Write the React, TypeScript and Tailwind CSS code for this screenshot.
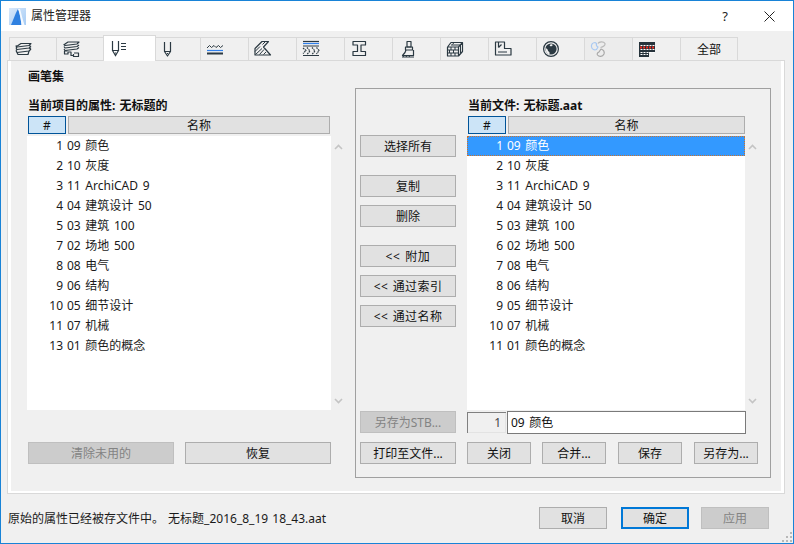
import React from 'react';

const leftRows = [
  ['1', '09 颜色'], ['2', '10 灰度'], ['3', '11 ArchiCAD 9'], ['4', '04 建筑设计 50'], ['5', '03 建筑 100'],
  ['7', '02 场地 500'], ['8', '08 电气'], ['9', '06 结构'], ['10', '05 细节设计'], ['11', '07 机械'], ['13', '01 颜色的概念'],
];
const rightRows = [
  ['1', '09 颜色'], ['2', '10 灰度'], ['3', '11 ArchiCAD 9'], ['4', '04 建筑设计 50'], ['5', '03 建筑 100'],
  ['6', '02 场地 500'], ['7', '08 电气'], ['8', '06 结构'], ['9', '05 细节设计'], ['10', '07 机械'], ['11', '01 颜色的概念'],
];

const Ico: React.FC<{ children: React.ReactNode }> = ({ children }) => (
  <svg width="18" height="18" viewBox="0 0 18 18" fill="none" stroke="#2b3942" strokeWidth="1.2" strokeLinejoin="round" className="block shrink-0">
    {children}
  </svg>
);

const tabIcons: React.ReactNode[] = [
  <Ico key="0">
    <path d="M3 5.5L6 3.5H16L14 5.5L2 7L1 6ZM1 8L2 9.5L14 8L16 6.5M1 10.5L2 12.5L14 11L16 9" />
    <path d="M2 7L1 8M2 9.5L1 10.5M14 5.5L16 6.5M14 8L16 9M2 12.5L3 14.5H13L14 11" />
  </Ico>,
  <Ico key="1">
    <path d="M3 4L6 2H17L15 4L3 5.5L2 4.5ZM2 6.5L3 8L15 6.5L17 5M2 9L3 10.5L15 9L17 7.5" />
    <path d="M5.5 11H2.5V14H6V12H9V15.5H12M12 13H16.5V16.5H11.5V14" />
  </Ico>,
  <svg key="2" width="20" height="18" viewBox="0 0 20 18" fill="none" stroke="#2b3942" strokeWidth="1.2" className="block shrink-0">
    <path d="M1.5 1V10.5H7.5V1M1.5 10.5L4.5 15.5L7.5 10.5M4 13H5" />
    <path d="M10 3.5H15M10 6.5H15M10 9.5H15" />
  </svg>,
  <Ico key="3">
    <path d="M3.5 2V11.5H9.5V2M3.5 11.5L6.5 16L9.5 11.5" />
    <path d="M6 13.5H7" />
  </Ico>,
  <Ico key="4">
    <path d="M1 8L3.5 5.5L5.5 7.5L8 5.5L10 7.5L12.5 5.5L14.5 7.5L17 5.5" strokeWidth="1" />
    <path d="M1 10.5H17" stroke="#2f80ed" />
    <path d="M1 13.5H17" strokeWidth="2" />
  </Ico>,
  <Ico key="5">
    <path d="M1 15V8.5L8 1.5H14.5L9.5 7L16.5 15Z" />
    <path d="M1 11.5L6 6.5M1.5 14.5L8 8.5M5.5 14.5L10 9.5M9.5 14.5L12 12M8.5 4.5L11 2" strokeWidth="1" />
  </Ico>,
  <Ico key="6">
    <path d="M1 1.5H17" />
    <path d="M1 3.5H17" stroke="#2f80ed" />
    <path d="M1 6H17M1 15.5H17" />
    <path d="M1 8L4 10.5L1 13.5M5 7.5L8 11L5 14.5M10 7.5L13 11L10 14.5M14.5 7.5L17 10.5L14.5 14" strokeDasharray="1.6 0.8" />
  </Ico>,
  <Ico key="7">
    <path d="M3 1.5H15.5V5H11V11.5H15.5V15.5H3V11.5H7.5V5H3Z" />
  </Ico>,
  <Ico key="8">
    <path d="M9 1.5H13V7H9Z" />
    <path d="M7.5 7H14.5V10H7.5ZM8 10L7 12.5L4.5 15.5H15.5V10" />
    <path d="M4 17H16M6 15.5L5 17M9 15.5L8 17M12 15.5L11 17" strokeWidth="1" />
  </Ico>,
  <Ico key="9">
    <path d="M1.5 7V16H12.5V7ZM1.5 7L5 2.5H16.5L12.5 7M16.5 2.5V11.5L12.5 16" />
    <path d="M1.5 10H12.5M1.5 13H12.5M5 7V10M9 7V10M3.5 10V13M7.5 10V13M5 13V16M9 13V16M14.5 5V13M5 5H14M8 2.5L6.5 4.5" strokeWidth="1" />
  </Ico>,
  <Ico key="10">
    <path d="M1.5 2H10.5V8.5H17V15H1.5Z" />
    <path d="M4.5 2V7.5M4.5 7.5L7.5 4.5M4 12H13" />
  </Ico>,
  <Ico key="11">
    <circle cx="9" cy="9" r="7.4" strokeWidth="1.2" />
    <circle cx="9" cy="9" r="5.6" fill="#2b3942" stroke="none" />
    <path d="M3.5 8C5 9 6 9 6 11C7 11.5 8 12 7.5 14.5C5 14 3.5 11.5 3.5 8ZM9 4L11 5L9 6.5L7.5 5.5Z" fill="#f0f0f0" stroke="none" />
  </Ico>,
  <Ico key="12">
    <path d="M5 2.5C2.5 2.5 1 4.5 1.5 7C2 9.5 4.5 10.5 6.5 9.5L8 7C7 6.5 6 5 6.5 3.5Z" stroke="#a9c9f2" />
    <path d="M8 3.5C9 1.5 13.5 1 15 3.5C15.5 5.5 13 7 10.5 7.5" stroke="#b9b9b9" />
    <path d="M11 9C13.5 10 15 11 14 14C12.5 17 9 17 7.5 15C6.5 13.5 8 12.5 9 12Z" stroke="#a8a8a8" />
  </Ico>,
  <svg key="13" width="16" height="15" viewBox="0 0 16 15" className="block shrink-0">
    <rect width="16" height="10" fill="#26333b" />
    <rect x="0" y="10" width="10" height="5" fill="#26333b" />
    <path d="M1.5 3.5H16M1.5 7.5H16M1.5 10.5H16" stroke="#fff" strokeDasharray="2 1" />
    <path d="M1 5.5H16" stroke="#e8291c" strokeWidth="2" strokeDasharray="2 1" />
    <path d="M1.5 12.5H9" stroke="#fff" strokeDasharray="2 1" />
  </svg>,
];

const tabWidths = ['w-[48px]', 'w-[48px]', 'w-[53px]', 'w-[46px]'];

const Btn: React.FC<{
  label: string;
  w?: string;
  disabled?: boolean;
  primary?: boolean;
  className?: string;
}> = ({ label, w = 'w-full', disabled, primary, className = '' }) => {
  let tone = 'border border-[#adadad] bg-[#e1e1e1] text-[#111]';
  if (disabled) tone = 'border border-[#bfbfbf] bg-[#cccccc] text-[#838383]';
  if (primary) tone = 'border-2 border-[#0078d7] bg-[#e1e1e1] text-[#111]';
  return (
    <div className={`${w} h-[22px] shrink-0 flex items-center justify-center pt-px whitespace-nowrap ${tone} ${className}`}>
      {label}
    </div>
  );
};

const Chevron: React.FC<{ up?: boolean }> = ({ up }) => (
  <svg width="9" height="6" viewBox="0 0 9 6" fill="none" stroke="#c4c4c4" strokeWidth="1.6" className="block">
    <path d={up ? 'M1 5L4.5 1.5L8 5' : 'M1 1L4.5 4.5L8 1'} />
  </svg>
);

const Header: React.FC<{ nameW: string }> = ({ nameW }) => (
  <div className="flex h-[18px] gap-[2px] pl-px">
    <div className="w-[38px] flex items-center justify-center pt-[2px] border border-[#005499] bg-[#cce4f7] text-[#111]">#</div>
    <div className={`${nameW} flex items-center justify-center pt-[2px] border border-[#adadad] bg-[#e1e1e1] text-[#111]`}>名称</div>
  </div>
);

const ListBox: React.FC<{ rows: string[][]; w: string; selected?: boolean }> = ({ rows, w, selected }) => (
  <div className={`${w} h-[274px] bg-white text-[#1a1a1a] shrink-0`}>
    {rows.map(([n, name], i) => {
      const on = selected && i === 0;
      return (
        <div
          key={n}
          className={`flex h-5 items-center ${on ? 'bg-[#3399ff] text-white outline-1 outline-dotted outline-offset-[-1px] outline-[#c9722e]' : ''}`}
        >
          <span className="w-[36px] text-right">{n}</span>
          <span className="pl-[4px] whitespace-pre [word-spacing:1.5px]">{name}</span>
        </div>
      );
    })}
  </div>
);

const ScrollCol: React.FC = () => (
  <div className="w-[14px] h-[274px] flex flex-col items-center justify-between pt-[8px] pb-[6px]">
    <Chevron up />
    <Chevron />
  </div>
);

export default function App() {
  return (
    <div className="w-[794px] h-[544px] overflow-hidden flex flex-col bg-[#f0f0f0] border border-[#1883d7] text-[12px] leading-none font-['Noto_Sans','Noto_Sans_CJK_SC',sans-serif]">
      {/* Title bar */}
      <div className="h-[30px] shrink-0 bg-white flex items-center pl-[8px]">
        <svg width="17" height="17" viewBox="0 0 17 17" className="block">
          <defs>
            <linearGradient id="logo" x1="0" y1="0" x2="1" y2="1">
              <stop offset="0" stopColor="#d8e8fa" />
              <stop offset="1" stopColor="#a6ccf5" />
            </linearGradient>
          </defs>
          <rect width="17" height="17" fill="url(#logo)" />
          <path d="M2 17C4 13 6 6 9 1C10.5 4 12 12 12.5 17Z" fill="#2f80e0" />
          <path d="M9 1H11C12.5 6 14 13 15.5 17H12.5C12 12 10.5 4 9 1Z" fill="#f5f9fe" />
        </svg>
        <span className="ml-[5px] text-[#222] text-[12px]">属性管理器</span>
        <div className="ml-auto flex items-center">
          <span className="w-[30px] mr-[6px] text-center text-[#222] text-[13px]">?</span>
          <div className="w-[45px] ml-[1px] mr-[1px] flex justify-center">
            <svg width="11" height="11" viewBox="0 0 11 11" stroke="#222" strokeWidth="1" className="block">
              <path d="M0.5 0.5L10.5 10.5M10.5 0.5L0.5 10.5" />
            </svg>
          </div>
        </div>
      </div>

      {/* Tabs */}
      <div className="h-[29px] shrink-0 flex items-end pl-[8px]">
        {tabIcons.map((ic, i) =>
          i === 2 ? (
            <div key={i} className="w-[53px] h-[26px] -ml-px -mb-px relative z-10 bg-white border border-b-0 border-[#d9d9d9] flex items-center pl-[7px]">
              {ic}
            </div>
          ) : (
            <div
              key={i}
              className={`${tabWidths[i] ?? 'w-[49px]'} h-[23px] -ml-px first:ml-0 border border-b-0 border-[#d9d9d9] flex items-center ${i === 13 ? 'pl-[6px]' : 'pl-[5px]'} ${i === 12 ? 'bg-[#ececec]' : 'bg-[#f0f0f0]'}`}
            >
              {ic}
            </div>
          ),
        )}
        <div className="w-[58px] h-[23px] -ml-px border border-b-0 border-[#d9d9d9] flex items-center justify-center pt-px text-[#111]">全部</div>
      </div>

      {/* Tab panel */}
      <div className="w-[778px] h-[434px] ml-[6px] shrink-0 border border-[#d9d9d9]">
        <div className="h-full border-x-[3px] border-b-[2px] border-white pl-[16px]">
          <div className="h-[23px] mb-[4px] flex items-end pl-px font-bold text-[#111] leading-[14px]">画笔集</div>

          <div className="flex">
            {/* Left column */}
            <div className="w-[328px] shrink-0 pt-[12px]">
              <div className="h-[16px] pl-px font-bold text-[#111] whitespace-nowrap [word-spacing:1px]">当前项目的属性: 无标题的</div>
              <Header nameW="w-[262px]" />
              <div className="flex mt-[2px]">
                <ListBox rows={leftRows} w="w-[304px]" />
                <ScrollCol />
              </div>
              <div className="flex gap-[11px] mt-[32px] pl-px">
                <Btn label="清除未用的" w="w-[146px]" disabled />
                <Btn label="恢复" w="w-[146px]" />
              </div>
            </div>

            {/* Right group box */}
            <div className="w-[416px] h-[390px] shrink-0 border border-[#a0a0a0] flex pl-[4px]">
              <div className="w-[107px] shrink-0 flex flex-col pt-[46px]">
                <Btn label="选择所有" w="w-[96px]" />
                <Btn label="复制" w="w-[96px]" className="mt-[18px]" />
                <Btn label="删除" w="w-[96px]" className="mt-[8px]" />
                <Btn label="<< 附加" w="w-[96px]" className="mt-[18px] tracking-[0.6px] [word-spacing:1px]" />
                <Btn label="<< 通过索引" w="w-[96px]" className="mt-[8px] tracking-[0.4px] [word-spacing:1px]" />
                <Btn label="<< 通过名称" w="w-[96px]" className="mt-[8px] tracking-[0.4px] [word-spacing:1px]" />
                <Btn label="另存为STB..." w="w-[96px]" disabled className="mt-[84px]" />
                <Btn label="打印至文件..." w="w-[96px]" className="mt-[9px]" />
              </div>
              <div className="flex-1 flex flex-col pt-[11px]">
                <div className="h-[16px] pl-px font-bold text-[#111] whitespace-nowrap [word-spacing:1px]">当前文件: 无标题.aat</div>
                <Header nameW="w-[237px]" />
                <div className="flex mt-[2px]">
                  <ListBox rows={rightRows} w="w-[278px]" selected />
                  <ScrollCol />
                </div>
                <div className="flex h-[23px] items-start mt-px">
                  <div className="w-[39px] h-[21px] mt-px border-t border-l border-t-[#808080] border-l-[#808080] bg-[#f0f0f0] shadow-[inset_-1px_-1px_0_#e3e3e3] flex items-center justify-end pr-[5px] text-[#444]">1</div>
                  <div className="w-[239px] h-[23px] ml-px border border-[#7a7a7a] bg-white flex items-center pl-[3px] text-[#111] whitespace-pre [word-spacing:1.5px]">09 颜色</div>
                </div>
                <div className="flex mt-[8px]">
                  <Btn label="关闭" w="w-[64px]" />
                  <Btn label="合并..." w="w-[64px]" className="ml-[11px]" />
                  <Btn label="保存" w="w-[64px]" className="ml-[12px]" />
                  <Btn label="另存为..." w="w-[64px]" className="ml-[12px]" />
                </div>
              </div>
            </div>
          </div>
        </div>
      </div>

      {/* Footer */}
      <div className="flex-1 relative flex items-start pl-[7px] pt-[13px]">
        <span className="h-[22px] pt-px flex items-center text-[#1a1a1a] whitespace-pre [word-spacing:1px]">原始的属性已经被存文件中。 无标题_2016_8_19 18_43.aat</span>
        <div className="ml-auto flex pr-[24px]">
          <Btn label="取消" w="w-[68px]" />
          <Btn label="确定" w="w-[68px]" primary className="ml-[14px]" />
          <Btn label="应用" w="w-[68px]" disabled className="ml-[12px]" />
        </div>
        <svg width="11" height="11" viewBox="0 0 11 11" fill="#b8b8b8" className="absolute right-0 bottom-0 block">
          <rect x="8" y="0" width="2" height="2" />
          <rect x="4" y="4" width="2" height="2" />
          <rect x="8" y="4" width="2" height="2" />
          <rect x="0" y="8" width="2" height="2" />
          <rect x="4" y="8" width="2" height="2" />
          <rect x="8" y="8" width="2" height="2" />
        </svg>
      </div>
    </div>
  );
}
